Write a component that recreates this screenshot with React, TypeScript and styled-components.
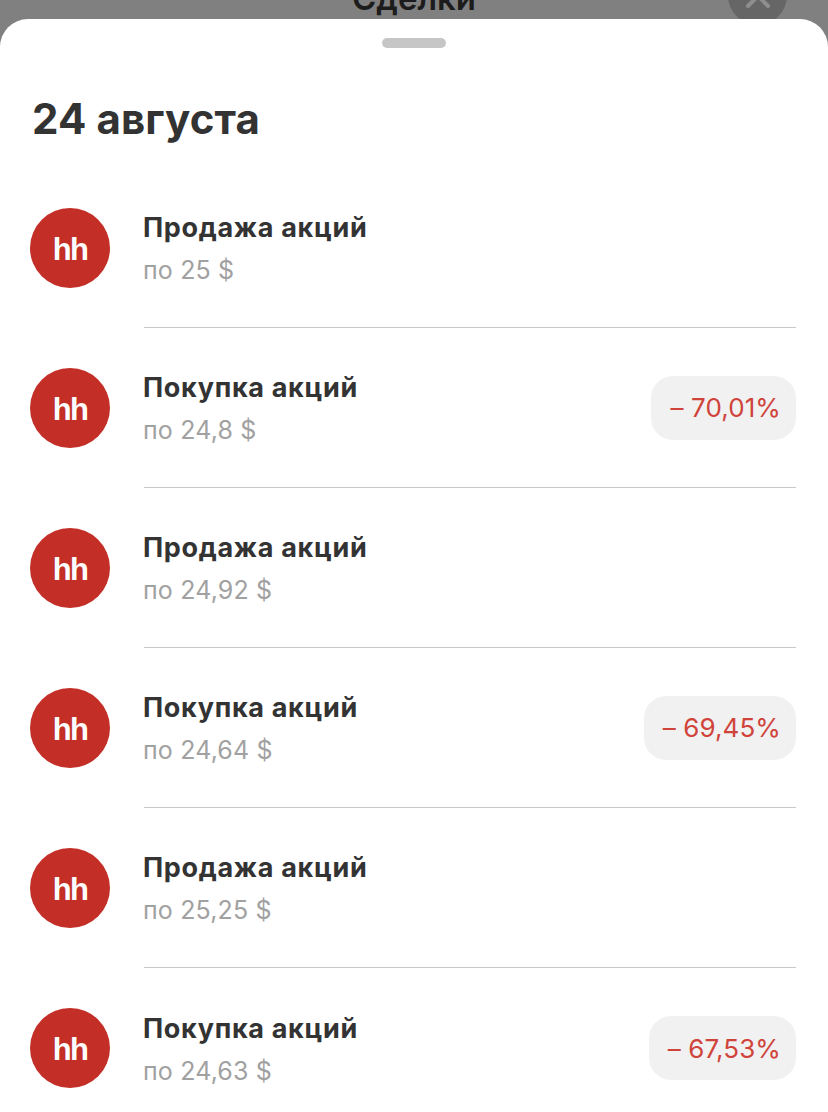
import React from "react";
import styled, { createGlobalStyle } from "styled-components";

const Global = createGlobalStyle`
  html, body { margin: 0; padding: 0; background: #808080; overflow: hidden; }
  body { font-family: Inter, "Liberation Sans", sans-serif; -webkit-font-smoothing: antialiased; }
`;

const Page = styled.div`
  width: 828px;
  height: 1112px;
  overflow: hidden;
  display: flex;
  flex-direction: column;
  background: #808080;
`;

const Backdrop = styled.header`
  position: relative;
  height: 19px;
  flex: none;
  overflow: hidden;
  display: flex;
  justify-content: center;
  align-items: flex-end;
`;

const BackTitle = styled.div`
  font-size: 33px;
  font-weight: 600;
  line-height: 40px;
  margin-bottom: 1px;
  color: #1c1c1c;
`;

const CloseCircle = styled.div`
  position: absolute;
  right: 41px;
  bottom: -6px;
  width: 59px;
  height: 59px;
  border-radius: 50%;
  background: #666666;
  display: flex;
  align-items: center;
  justify-content: center;
  color: #8e8e8e;
`;

const Sheet = styled.main`
  flex: 1;
  background: #fff;
  border-radius: 28px 28px 0 0;
  display: flex;
  flex-direction: column;
  min-height: 0;
`;

const Grabber = styled.div`
  width: 64px;
  height: 10px;
  border-radius: 5px;
  background: #c6c6c6;
  align-self: center;
  margin-top: 19px;
  flex: none;
`;

const Title = styled.h1`
  margin: 46px 0 0 32px;
  font-size: 42px;
  line-height: 50px;
  font-weight: 700;
  color: #333333;
  letter-spacing: 0.1px;
  flex: none;
`;

const List = styled.ul`
  list-style: none;
  margin: 24px 0 0;
  padding: 0 32px 0 30px;
  display: flex;
  flex-direction: column;
`;

const Row = styled.li`
  height: 160px;
  flex: none;
  display: flex;
  align-items: center;
  gap: 34px;
`;

const Avatar = styled.div`
  width: 80px;
  height: 80px;
  border-radius: 50%;
  background: #c32e27;
  color: #fff;
  flex: none;
  display: flex;
  align-items: center;
  justify-content: center;
  font-family: "Liberation Sans", sans-serif;
  font-size: 31px;
  font-weight: 700;
  letter-spacing: -1.6px;
  padding-top: 4px;
  box-sizing: border-box;
  margin-top: -1px;
`;

const Body = styled.div<{ $last: boolean }>`
  flex: 1;
  align-self: stretch;
  display: flex;
  align-items: center;
  justify-content: space-between;
  border-bottom: ${(p) => (p.$last ? "none" : "1px solid #c8c8c8")};
`;

const Text = styled.div`
  display: flex;
  flex-direction: column;
  gap: 11px;
  margin-left: -1px;
  padding-top: 1px;
`;

const Name = styled.div`
  font-size: 27px;
  line-height: 33px;
  font-weight: 700;
  color: #333333;
  letter-spacing: 0.68px;
`;

const Price = styled.div`
  font-size: 25px;
  line-height: 30px;
  color: #a1a1a1;
  letter-spacing: 0.15px;
`;

const Badge = styled.div`
  height: 64px;
  padding: 0 15px 0 19px;
  border-radius: 22px;
  background: #f1f1f1;
  color: #d0433b;
  font-size: 26px;
  letter-spacing: 0.1px;
  display: flex;
  align-items: center;
  white-space: nowrap;
`;

const deals = [
  { name: "Продажа акций", price: "по 25 $" },
  { name: "Покупка акций", price: "по 24,8 $", pct: "– 70,01%" },
  { name: "Продажа акций", price: "по 24,92 $" },
  { name: "Покупка акций", price: "по 24,64 $", pct: "– 69,45%" },
  { name: "Продажа акций", price: "по 25,25 $" },
  { name: "Покупка акций", price: "по 24,63 $", pct: "– 67,53%" },
];

export default function App() {
  return (
    <Page>
      <Global />
      <Backdrop>
        <BackTitle>Сделки</BackTitle>
        <CloseCircle>
          <svg width="24" height="24" viewBox="0 0 24 24" fill="none" stroke="currentColor" strokeWidth="4" strokeLinecap="round">
            <path d="M2 2l20 20M22 2L2 22" />
          </svg>
        </CloseCircle>
      </Backdrop>
      <Sheet>
        <Grabber />
        <Title>24 августа</Title>
        <List>
          {deals.map((d, i) => (
            <Row key={i}>
              <Avatar>hh</Avatar>
              <Body $last={i === deals.length - 1}>
                <Text>
                  <Name>{d.name}</Name>
                  <Price>{d.price}</Price>
                </Text>
                {d.pct && <Badge>{d.pct}</Badge>}
              </Body>
            </Row>
          ))}
        </List>
      </Sheet>
    </Page>
  );
}
